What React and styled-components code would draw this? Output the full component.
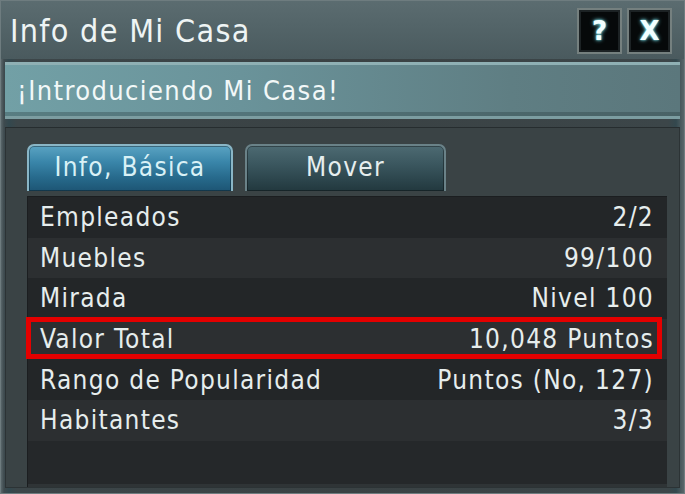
import React from 'react'
import styled, { createGlobalStyle } from 'styled-components'

const GlobalStyle = createGlobalStyle`
  html, body {
    margin: 0;
    padding: 0;
    background: #3b4446;
  }
  * { box-sizing: border-box; }
`

const FONT = `"DejaVu Sans Condensed", "DejaVu Sans", sans-serif`

const rows = [
  { label: 'Empleados', value: '2/2' },
  { label: 'Muebles', value: '99/100' },
  { label: 'Mirada', value: 'Nivel 100' },
  { label: 'Valor Total', value: '10,048 Puntos', marked: true },
  { label: 'Rango de Popularidad', value: 'Puntos (No, 127)' },
  { label: 'Habitantes', value: '3/3' },
]

export default function App() {
  return (
    <>
      <GlobalStyle />
      <Window>
        <TitleBar>
          <Title>Info de Mi Casa</Title>
          <Controls>
            <CtrlButton>?</CtrlButton>
            <CtrlButton>X</CtrlButton>
          </Controls>
        </TitleBar>
        <Subtitle>¡Introduciendo Mi Casa!</Subtitle>
        <Body>
          <Tabs>
            <Tab active>Info, Básica</Tab>
            <Tab>Mover</Tab>
          </Tabs>
          <Panel>
            {rows.map((r, i) => (
              <Row key={r.label} odd={i % 2 === 1} marked={r.marked}>
                <span>{r.label}</span>
                <span>{r.value}</span>
              </Row>
            ))}
          </Panel>
        </Body>
      </Window>
    </>
  )
}

const Window = styled.div`
  width: 685px;
  height: 494px;
  display: flex;
  flex-direction: column;
  background: linear-gradient(90deg, #59666a 0px, #3e4a4e 3px, #33484e 8px, #3c4649 16px, #3a4244 50%, #3c4649 calc(100% - 16px), #33484e calc(100% - 8px), #4a5a5e calc(100% - 3px), #59666a 100%);
  border: 1px solid #6e7c7f;
  font-family: ${FONT};
  color: #e8efef;
  overflow: hidden;
`

const TitleBar = styled.div`
  height: 58px;
  flex: none;
  display: flex;
  align-items: center;
  justify-content: space-between;
  padding: 0 12px 0 9px;
  background: linear-gradient(180deg, #5b6c70 0%, #536468 45%, #4a5a5e 100%);
`

const Title = styled.div`
  font-size: 32px;
  letter-spacing: 1.3px;
  color: #eef4f4;
  margin-top: 2px;
`

const Controls = styled.div`
  display: flex;
  gap: 5px;
  align-self: flex-start;
  margin-top: 7px;
`

const CtrlButton = styled.div`
  width: 45px;
  height: 46px;
  display: flex;
  align-items: center;
  justify-content: center;
  background: #06090a;
  border: 2px solid #75807f;
  box-shadow: inset 0 0 0 2px #1c2224;
  font-family: "DejaVu Sans", sans-serif;
  font-weight: bold;
  font-size: 26px;
  color: #f2ffff;
  text-shadow: 0 0 4px #7fe6f0, 0 0 2px #7fe6f0;
`

const Subtitle = styled.div`
  height: 57px;
  flex: none;
  margin: 3px 4px 0;
  display: flex;
  align-items: center;
  padding-left: 12px;
  font-size: 27px;
  letter-spacing: 1.4px;
  color: #f2f8f8;
  background: linear-gradient(90deg, #72a0a6 0%, #6a939a 35%, #5f7e83 75%, #5b777c 100%);
  border-top: 3px solid #8fb0b4;
  border-bottom: 3px solid #7c9da1;
  box-shadow: inset 0 -4px 0 rgba(40, 60, 64, 0.35);
`

const Body = styled.div`
  flex: 1;
  display: flex;
  flex-direction: column;
  margin: 8px 4px 5px;
  padding: 16px 12px 0 21px;
  background: #3a4345;
  border: 1px solid #2c3335;
  border-top-color: #262d2f;
`

const Tabs = styled.div`
  display: flex;
  gap: 12px;
  height: 47px;
  flex: none;
`

const Tab = styled.div`
  width: ${p => (p.active ? '206px' : '201px')};
  display: flex;
  align-items: center;
  justify-content: center;
  padding-bottom: 4px;
  font-size: 26px;
  letter-spacing: 1.3px;
  color: ${p => (p.active ? '#d9f1f6' : '#e6eeee')};
  border: 2px solid ${p => (p.active ? '#8ab6c6' : '#6a8288')};
  border-bottom: none;
  border-radius: 7px 7px 0 0;
  background: ${p =>
    p.active
      ? 'linear-gradient(180deg, #5aa3c2 0%, #3a86aa 35%, #276a8c 70%, #1d5574 100%)'
      : 'linear-gradient(180deg, #4d6a72 0%, #3b575f 40%, #2c454c 75%, #22383e 100%)'};
  box-shadow: inset 0 0 0 1px rgba(0, 0, 0, 0.35);
`

const Panel = styled.div`
  flex: 1;
  margin-top: 5px;
  background: #25282a;
  border-top: 1px solid #1b1e20;
  border-left: 1px solid #1b1e20;
  box-shadow: inset 0 -3px 0 #2f3436;
`

const Row = styled.div`
  position: relative;
  height: 40.6px;
  display: flex;
  align-items: center;
  justify-content: space-between;
  padding: 0 13px 0 12px;
  font-size: 26px;
  letter-spacing: 1.3px;
  color: #e6eded;
  background: ${p => (p.odd ? '#2c2f31' : '#232628')};

  ${p =>
    p.marked &&
    `
    &::after {
      content: '';
      position: absolute;
      left: -2px;
      right: 5px;
      top: -2px;
      bottom: 0;
      border: 5px solid #e40000;
    }
  `}
`
